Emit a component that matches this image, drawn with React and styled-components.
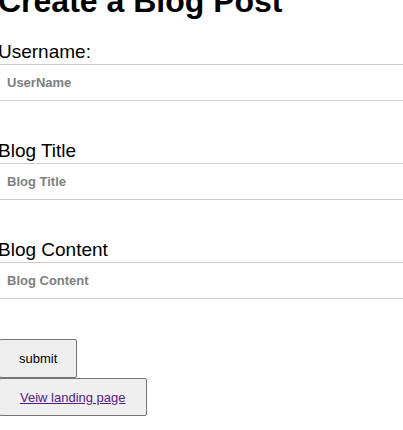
import React from 'react';
import styled, { createGlobalStyle } from 'styled-components';

const GlobalStyle = createGlobalStyle`
  html, body {
    margin: 0;
    padding: 0;
    background: #fff;
    overflow: hidden;
  }
  body {
    font-family: "Liberation Sans", Arial, sans-serif;
  }
`;

const Page = styled.div`
  margin: -17px 0 0 -2px;
  width: calc(100% + 2px);
`;

const Heading = styled.h1`
  margin: 0;
  font-size: 32px;
  line-height: 37px;
  font-weight: bold;
  color: #000;
`;

const Form = styled.form`
  display: flex;
  flex-direction: column;
  margin-top: 21px;
`;

const Field = styled.div`
  display: flex;
  flex-direction: column;
  margin-bottom: 39px;

  &:last-of-type {
    margin-bottom: 40px;
  }
`;

const Label = styled.label`
  font-size: 19px;
  line-height: 22px;
  color: #000;
`;

const Input = styled.input`
  box-sizing: border-box;
  width: 100%;
  height: 37px;
  margin: 1px 0 0;
  padding: 0 0 0 9px;
  border: none;
  border-top: 1px solid #ccc;
  border-bottom: 1px solid #ccc;
  font-family: "Liberation Sans", Arial, sans-serif;
  font-size: 13px;
  font-weight: bold;
  outline: none;

  &::placeholder {
    color: #808080;
  }
`;

const Button = styled.button`
  box-sizing: border-box;
  align-self: flex-start;
  height: ${(p) => p.$h}px;
  margin-left: 1px;
  padding: 0 ${(p) => p.$pad}px;
  background: #efefef;
  border: 1px solid #767676;
  border-radius: 2px;
  font-family: "Liberation Sans", Arial, sans-serif;
  font-size: 13px;
  color: #000;
`;

const LandingLink = styled.a`
  color: #551a8b;
  text-decoration: underline;
`;

function App() {
  return (
    <>
      <GlobalStyle />
      <Page>
        <Heading>Create a Blog Post</Heading>
        <Form onSubmit={(e) => e.preventDefault()}>
          <Field>
            <Label>Username:</Label>
            <Input placeholder="UserName" />
          </Field>
          <Field>
            <Label>Blog Title</Label>
            <Input placeholder="Blog Title" />
          </Field>
          <Field>
            <Label>Blog Content</Label>
            <Input placeholder="Blog Content" />
          </Field>
          <Button type="submit" $h={39} $pad={19}>submit</Button>
          <Button type="button" $h={38} $pad={20}>
            <LandingLink href="#">Veiw landing page</LandingLink>
          </Button>
        </Form>
      </Page>
    </>
  );
}

export default App;
